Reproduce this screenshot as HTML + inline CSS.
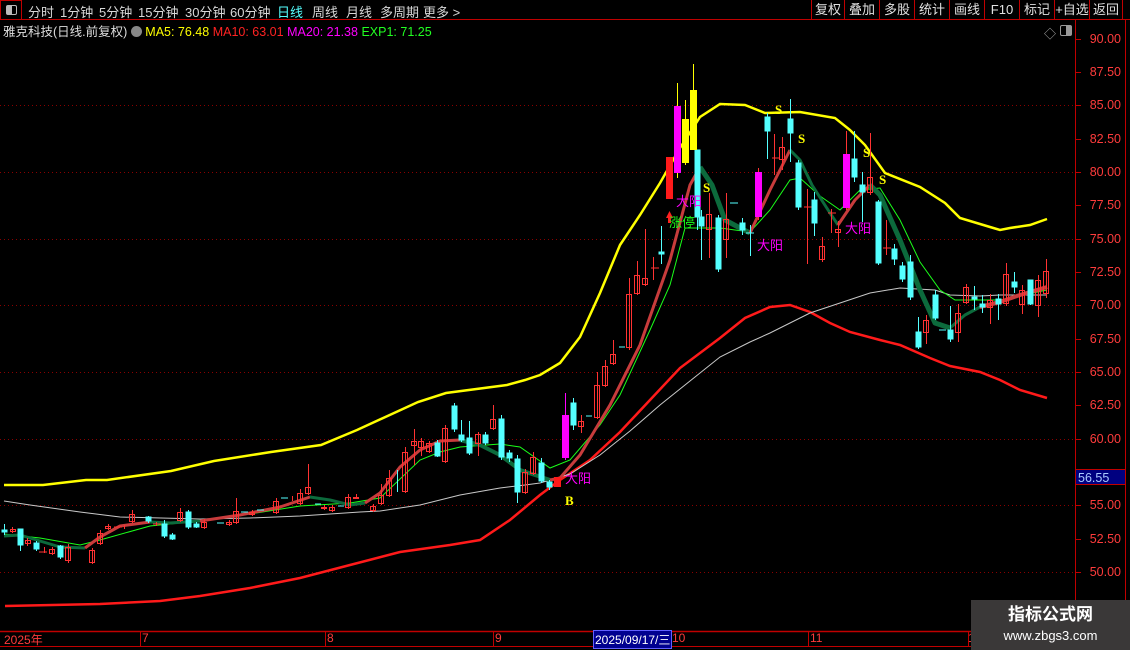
<!DOCTYPE html>
<html><head><meta charset="utf-8"><style>
*{margin:0;padding:0;box-sizing:border-box}
body{width:1130px;height:650px;background:#000;overflow:hidden;font-family:"Liberation Sans","Noto Sans CJK SC",sans-serif;position:relative}
.top{position:absolute;left:0;top:0;width:1130px;height:20px;border-bottom:1px solid #c00000}
.tab{position:absolute;top:2px;font-size:13px;color:#d8d8d8}
.btn{position:absolute;top:0;height:19px;border-left:1px solid #c00000;font-size:13px;color:#e0e0e0;text-align:center;line-height:19px}
.l2{position:absolute;top:21px;left:3px;font-size:12.5px;white-space:nowrap}
.ax{position:absolute;right:9px;font-size:12.5px;color:#ff3c3c;text-align:right}
.dl{position:absolute;top:631px;font-size:12px;color:#ff3c3c}
</style></head><body>
<div class="top">
<div style="position:absolute;left:0;top:0;width:22px;height:20px;border:1px solid #c00000"><div style="position:absolute;left:5px;top:4px;width:11px;height:10px;border:1px solid #bbb;border-radius:2px"><div style="position:absolute;left:0;top:0;width:5px;height:8px;background:#bbb"></div></div></div>
<span class="tab" style="left:28px">分时</span><span class="tab" style="left:60px">1分钟</span><span class="tab" style="left:99px">5分钟</span><span class="tab" style="left:138px">15分钟</span><span class="tab" style="left:185px">30分钟</span><span class="tab" style="left:230px">60分钟</span><span class="tab" style="left:277px;color:#5ff">日线</span><span class="tab" style="left:312px">周线</span><span class="tab" style="left:346px">月线</span><span class="tab" style="left:380px">多周期</span><span class="tab" style="left:423px">更多 &gt;</span>
<div class="btn" style="left:811px;width:33px">复权</div><div class="btn" style="left:844px;width:35px">叠加</div><div class="btn" style="left:879px;width:35px">多股</div><div class="btn" style="left:914px;width:35px">统计</div><div class="btn" style="left:949px;width:35px">画线</div><div class="btn" style="left:984px;width:35px">F10</div><div class="btn" style="left:1019px;width:35px">标记</div><div class="btn" style="left:1054px;width:35px">+自选</div><div class="btn" style="left:1089px;width:34px;border-right:1px solid #c00000">返回</div>
</div>
<div class="l2"><span style="color:#ddd">雅克科技(日线.前复权)</span> <span style="display:inline-block;width:11px;height:11px;border-radius:6px;background:#888;vertical-align:-1px"></span> <span style="color:#ff0">MA5: 76.48</span> <span style="color:#f22">MA10: 63.01</span> <span style="color:#f0f">MA20: 21.38</span> <span style="color:#2f2">EXP1: 71.25</span></div>
<div style="position:absolute;left:1044px;top:25px;color:#aaa;font-size:12px">◇</div>
<div style="position:absolute;left:1060px;top:25px;width:12px;height:11px;border:1px solid #999;border-radius:2px"><div style="position:absolute;right:0;top:0;width:5px;height:9px;background:#999"></div></div>
<svg width="1130" height="650" style="position:absolute;left:0;top:0">
<g stroke="#8a0000" stroke-dasharray="1,3" stroke-width="1">
<line x1="0" y1="105.5" x2="1075" y2="105.5"/><line x1="0" y1="172.5" x2="1075" y2="172.5"/><line x1="0" y1="239.5" x2="1075" y2="239.5"/><line x1="0" y1="305.5" x2="1075" y2="305.5"/><line x1="0" y1="372.5" x2="1075" y2="372.5"/><line x1="0" y1="439.5" x2="1075" y2="439.5"/><line x1="0" y1="505.5" x2="1075" y2="505.5"/><line x1="0" y1="572.5" x2="1075" y2="572.5"/>
</g>
<line x1="1075.5" y1="20" x2="1075.5" y2="631" stroke="#c00000"/>
<line x1="1125.5" y1="20" x2="1125.5" y2="650" stroke="#c00000"/>
<line x1="0" y1="631.5" x2="1130" y2="631.5" stroke="#c00000" stroke-width="1.5"/>
<line x1="0" y1="646.5" x2="1130" y2="646.5" stroke="#c00000"/>
<g stroke="#c00000"><line x1="1076" y1="39.5" x2="1081" y2="39.5"/><line x1="1076" y1="72.5" x2="1081" y2="72.5"/><line x1="1076" y1="105.5" x2="1081" y2="105.5"/><line x1="1076" y1="139.5" x2="1081" y2="139.5"/><line x1="1076" y1="172.5" x2="1081" y2="172.5"/><line x1="1076" y1="205.5" x2="1081" y2="205.5"/><line x1="1076" y1="239.5" x2="1081" y2="239.5"/><line x1="1076" y1="272.5" x2="1081" y2="272.5"/><line x1="1076" y1="305.5" x2="1081" y2="305.5"/><line x1="1076" y1="339.5" x2="1081" y2="339.5"/><line x1="1076" y1="372.5" x2="1081" y2="372.5"/><line x1="1076" y1="405.5" x2="1081" y2="405.5"/><line x1="1076" y1="439.5" x2="1081" y2="439.5"/><line x1="1076" y1="472.5" x2="1081" y2="472.5"/><line x1="1076" y1="505.5" x2="1081" y2="505.5"/><line x1="1076" y1="539.5" x2="1081" y2="539.5"/><line x1="1076" y1="572.5" x2="1081" y2="572.5"/>
<line x1="140.5" y1="632" x2="140.5" y2="646"/><line x1="325.5" y1="632" x2="325.5" y2="646"/><line x1="493.5" y1="632" x2="493.5" y2="646"/><line x1="808.5" y1="632" x2="808.5" y2="646"/><line x1="968.5" y1="632" x2="968.5" y2="646"/></g>
<!-- bands -->
<polyline fill="none" stroke="#ffff00" stroke-width="2.5" points="4,485 43,485 86,480 107,480 171,471 214,461 271,452 321,445 357,430 418,402 446,393 507,385 525,380 540,375 560,363 580,337 600,293 620,245 640,215 660,183 680,148 700,117 720,104 745,105 765,113 800,112 835,118 850,130 865,145 885,173 920,187 945,203 960,218 990,227 1000,230 1010,228 1030,225 1047,219"/>
<polyline fill="none" stroke="#ff1a1a" stroke-width="2.5" points="5,606 100,604 160,601 200,596 250,588 300,578 350,565 400,552 450,545 480,540 510,520 540,495 560,480 590,460 620,432 650,400 680,368 720,338 745,318 770,307 790,305 810,312 830,323 850,332 880,340 900,345 930,358 950,366 980,372 1000,380 1020,390 1047,398"/>
<polyline fill="none" stroke="#c8c8c8" stroke-width="1" points="4,501 30,505 80,512 120,517 200,519 250,518 300,516 360,512 380,511 420,505 460,495 500,488 525,485 540,483 570,474 600,455 630,431 660,405 690,381 720,357 750,342 770,333 790,323 810,313 840,303 870,293 900,288 935,290 950,295 980,296 1000,295 1047,295"/>
<polyline fill="none" stroke="#1aff1a" stroke-width="1" points="4,534 40,538 80,545 100,540 150,526 200,521 250,514 300,506 350,503 380,498 420,460 440,452 460,447 500,444 520,447 550,468 570,460 600,425 620,395 650,330 670,285 685,228 700,228 720,228 750,232 770,210 790,180 800,178 820,196 840,210 860,190 880,188 900,220 920,262 940,290 955,300 975,300 1000,300 1047,290"/>
<g fill="none" stroke-width="3" stroke-linejoin="round">
<polyline stroke="#0c6a3c" points="4,536 20,535 40,541 60,547 85,548"/>
<polyline stroke="#c83c3c" points="85,548 100,537 120,526 150,522"/>
<polyline stroke="#0c6a3c" points="150,522 170,523 200,521"/>
<polyline stroke="#c83c3c" points="200,521 240,515 280,507 310,497"/>
<polyline stroke="#0c6a3c" points="310,497 330,500 350,505 365,503"/>
<polyline stroke="#c83c3c" points="365,503 380,493 400,467 420,450 440,441 460,440"/>
<polyline stroke="#0c6a3c" stroke-width="4" points="460,440 480,445 500,455 520,470 550,480"/>
<polyline stroke="#c83c3c" points="550,480 560,478 580,455 610,405 640,345 670,260 690,185 700,167"/>
<polyline stroke="#0c6a3c" stroke-width="5" points="700,167 712,185 725,220 740,228 750,233"/>
<polyline stroke="#c83c3c" points="750,233 770,190 790,150"/>
<polyline stroke="#0c6a3c" points="790,150 800,160 812,185 830,213 838,225"/>
<polyline stroke="#c83c3c" points="838,225 855,200 870,185"/>
<polyline stroke="#0c6a3c" stroke-width="5" points="870,185 880,195 900,240 920,290 935,323 950,328"/>
<polyline stroke="#0c6a3c" points="950,328 965,315 980,307"/>
<polyline stroke="#c83c3c" stroke-width="4" points="980,307 1000,302 1020,295 1047,287"/>
</g>
<!-- candles -->
<g id="c"></g>
<g stroke="#ff3232" fill="none" stroke-width="1">
<path d="M12.5,527V533M27.5,538V546M44.5,547V553M52.5,547V555M68.5,544V563M92.5,548V564M100.5,530V545M108.5,524V530M124.5,525V529M132.5,510V523M156.5,522V526M180.5,508V522M204.5,519V529M229.5,520V526M236.5,498V524M252.5,510V516M276.5,498V514M292.5,496V501M300.5,489V505M308.5,464V495M324.5,505V510M332.5,505V512M348.5,494V509M356.5,494V499M373.5,504V512M381.5,484V505M389.5,470V497M405.5,447V493M414.5,429V465M421.5,438V456M429.5,441V453M445.5,425V463M478.5,432V456M493.5,405V430M525.5,469V494M533.5,452V475M581.5,415V433M597.5,372V419M605.5,360V387M613.5,340V365M629.5,278V350M637.5,261V295M645.5,229V286M653.5,257V280M709.5,193V258M726.5,193V258M774.5,134V175M782.5,137V170M807.5,189V264M822.5,237V262M831.5,209V233M838.5,221V247M870.5,133V195M886.5,220V255M926.5,315V344M958.5,304V342M966.5,284V304M990.5,294V324M1006.5,263V306M1022.5,285V314M1038.5,275V317M1046.5,259V298"/>
<rect x="10.5" y="529.5" width="5" height="2"/><rect x="25.5" y="540.5" width="5" height="3"/><rect x="49.5" y="549.5" width="5" height="4"/><rect x="65.5" y="547.5" width="5" height="13"/><rect x="89.5" y="550.5" width="5" height="12"/><rect x="97.5" y="533.5" width="5" height="10"/><rect x="105.5" y="526.5" width="5" height="2"/><rect x="129.5" y="514.5" width="5" height="7"/><rect x="177.5" y="512.5" width="5" height="8"/><rect x="201.5" y="522.5" width="5" height="5"/><rect x="226.5" y="522.5" width="5" height="2"/><rect x="233.5" y="511.5" width="5" height="11"/><rect x="249.5" y="512.5" width="5" height="2"/><rect x="273.5" y="501.5" width="5" height="11"/><rect x="297.5" y="493.5" width="5" height="10"/><rect x="305.5" y="487.5" width="5" height="6"/><rect x="321.5" y="507.5" width="5" height="1"/><rect x="329.5" y="507.5" width="5" height="3"/><rect x="345.5" y="497.5" width="5" height="10"/><rect x="353.5" y="497.5" width="5" height="1"/><rect x="370.5" y="506.5" width="5" height="4"/><rect x="378.5" y="495.5" width="5" height="8"/><rect x="386.5" y="478.5" width="5" height="17"/><rect x="402.5" y="452.5" width="5" height="39"/><rect x="411.5" y="441.5" width="5" height="4"/><rect x="418.5" y="441.5" width="5" height="6"/><rect x="426.5" y="443.5" width="5" height="8"/><rect x="442.5" y="428.5" width="5" height="33"/><rect x="475.5" y="434.5" width="5" height="9"/><rect x="490.5" y="419.5" width="5" height="9"/><rect x="522.5" y="472.5" width="5" height="20"/><rect x="530.5" y="457.5" width="5" height="16"/><rect x="578.5" y="421.5" width="5" height="5"/><rect x="594.5" y="385.5" width="5" height="32"/><rect x="602.5" y="366.5" width="5" height="19"/><rect x="610.5" y="354.5" width="5" height="9"/><rect x="626.5" y="294.5" width="5" height="53"/><rect x="634.5" y="275.5" width="5" height="18"/><rect x="642.5" y="278.5" width="5" height="6"/><rect x="706.5" y="214.5" width="5" height="15"/><rect x="723.5" y="219.5" width="5" height="20"/><rect x="779.5" y="147.5" width="5" height="12"/><rect x="819.5" y="246.5" width="5" height="13"/><rect x="835.5" y="229.5" width="5" height="3"/><rect x="867.5" y="177.5" width="5" height="15"/><rect x="923.5" y="320.5" width="5" height="12"/><rect x="955.5" y="313.5" width="5" height="19"/><rect x="963.5" y="287.5" width="5" height="15"/><rect x="987.5" y="300.5" width="5" height="7"/><rect x="1003.5" y="274.5" width="5" height="29"/><rect x="1019.5" y="290.5" width="5" height="14"/><rect x="1035.5" y="280.5" width="5" height="25"/><rect x="1043.5" y="271.5" width="5" height="22"/>
<path d="M39,552H47M114,527H122M153,524H161M651,268H659M772,158H780M804,207H812M828,213H836M883,248H891"/>
</g>
<g fill="#54ffff" stroke="#54ffff" stroke-width="1">
<path d="M4.5,524V535M20.5,529V551M36.5,541V551M60.5,545V559M148.5,516V523M164.5,520V538M172.5,533V540M188.5,510V529M196.5,522V528M397.5,470V492M437.5,440V457M454.5,403V432M461.5,420V442M469.5,421V455M485.5,432V445M501.5,415V460M509.5,450V462M517.5,455V503M541.5,458V483M549.5,480V490M573.5,398V430M661.5,226V264M697.5,150V230M701.5,210V260M718.5,215V272M742.5,218V235M750.5,225V256M767.5,113V159M790.5,99V162M798.5,160V210M814.5,192V236M854.5,131V182M862.5,172V222M878.5,200V265M894.5,244V265M902.5,262V282M910.5,255V300M918.5,317V349M935.5,290V320M950.5,306V342M974.5,286V310M982.5,295V313M998.5,294V320M1014.5,272V293M1030.5,280V305"/>
<rect x="2" y="530" width="5" height="2"/><rect x="18" y="529" width="5" height="16"/><rect x="34" y="543" width="5" height="6"/><rect x="58" y="546" width="5" height="11"/><rect x="146" y="517" width="5" height="4"/><rect x="162" y="524" width="5" height="12"/><rect x="170" y="535" width="5" height="4"/><rect x="186" y="512" width="5" height="15"/><rect x="194" y="524" width="5" height="3"/><rect x="435" y="443" width="5" height="13"/><rect x="452" y="406" width="5" height="23"/><rect x="459" y="435" width="5" height="5"/><rect x="467" y="438" width="5" height="15"/><rect x="483" y="435" width="5" height="8"/><rect x="499" y="419" width="5" height="38"/><rect x="507" y="453" width="5" height="5"/><rect x="515" y="459" width="5" height="33"/><rect x="539" y="463" width="5" height="18"/><rect x="547" y="482" width="5" height="5"/><rect x="571" y="403" width="5" height="22"/><rect x="659" y="252" width="5" height="2"/><rect x="695" y="150" width="5" height="67"/><rect x="699" y="217" width="5" height="9"/><rect x="716" y="218" width="5" height="51"/><rect x="740" y="223" width="5" height="7"/><rect x="765" y="117" width="5" height="14"/><rect x="788" y="119" width="5" height="14"/><rect x="796" y="163" width="5" height="44"/><rect x="812" y="200" width="5" height="23"/><rect x="852" y="159" width="5" height="18"/><rect x="860" y="185" width="5" height="7"/><rect x="876" y="202" width="5" height="61"/><rect x="892" y="249" width="5" height="10"/><rect x="900" y="266" width="5" height="13"/><rect x="908" y="262" width="5" height="35"/><rect x="916" y="332" width="5" height="15"/><rect x="933" y="295" width="5" height="23"/><rect x="948" y="330" width="5" height="9"/><rect x="972" y="297" width="5" height="2"/><rect x="980" y="304" width="5" height="3"/><rect x="996" y="299" width="5" height="5"/><rect x="1012" y="282" width="5" height="5"/><rect x="1028" y="280" width="5" height="24"/>
<path d="M217,523H224M241,512H248M257,510H264M281,498H288M315,504H321M338,506H344M586,416H592M619,347H625M730,203H738M746,233H754M939,330H946"/>
</g>
<!-- filled special candles -->
<rect x="554" y="477" width="7" height="10" fill="#ff1a1a"/><rect x="666" y="157" width="7" height="42" fill="#ff1a1a"/>
<line x1="565.5" y1="393" x2="565.5" y2="460" stroke="#f0f"/><rect x="562" y="415" width="7" height="43" fill="#f0f"/>
<line x1="677.5" y1="83" x2="677.5" y2="178" stroke="#ff0"/><rect x="674" y="106" width="7" height="67" fill="#f0f"/>
<line x1="685.5" y1="100" x2="685.5" y2="165" stroke="#ff0"/><rect x="682" y="119" width="7" height="44" fill="#ff0"/>
<line x1="693.5" y1="64" x2="693.5" y2="150" stroke="#ff0"/><rect x="690" y="90" width="7" height="60" fill="#ff0"/>
<line x1="758.5" y1="168" x2="758.5" y2="220" stroke="#f33"/><rect x="755" y="172" width="7" height="45" fill="#f0f"/>
<line x1="846.5" y1="131" x2="846.5" y2="210" stroke="#f33"/><rect x="843" y="154" width="7" height="54" fill="#f0f"/>
<path d="M666,218L669.5,211L673,218Z M668,218h3v5h-3z" fill="#ff2020"/>
<g font-family="Liberation Sans,Noto Sans CJK SC,sans-serif" font-size="13">
<text x="676" y="206" fill="#f0f">大阳</text><text x="669" y="227" fill="#1aff1a">涨停</text>
<text x="757" y="250" fill="#f0f">大阳</text><text x="845" y="233" fill="#f0f">大阳</text><text x="565" y="483" fill="#f0f">大阳</text>
</g>
<g font-family="Liberation Serif,serif" font-size="13" font-weight="bold" fill="#ff0">
<text x="775" y="114">S</text><text x="798" y="143">S</text><text x="703" y="192">S</text><text x="863" y="157">S</text><text x="879" y="184">S</text><text x="565" y="505">B</text>
</g>
</svg>
<div class="ax" style="top:32px">90.00</div><div class="ax" style="top:65px">87.50</div><div class="ax" style="top:98px">85.00</div><div class="ax" style="top:132px">82.50</div><div class="ax" style="top:165px">80.00</div><div class="ax" style="top:198px">77.50</div><div class="ax" style="top:232px">75.00</div><div class="ax" style="top:265px">72.50</div><div class="ax" style="top:298px">70.00</div><div class="ax" style="top:332px">67.50</div><div class="ax" style="top:365px">65.00</div><div class="ax" style="top:398px">62.50</div><div class="ax" style="top:432px">60.00</div><div class="ax" style="top:498px">55.00</div><div class="ax" style="top:532px">52.50</div><div class="ax" style="top:565px">50.00</div>
<div style="position:absolute;left:1076px;top:469px;width:49px;height:16px;background:#000080;color:#aac8ff;font-size:12.5px;line-height:16px;padding-left:2px;border-top:1px solid #c00000;border-bottom:1px solid #c00000">56.55</div>
<div class="dl" style="left:4px">2025年</div><div class="dl" style="left:142px">7</div><div class="dl" style="left:327px">8</div><div class="dl" style="left:495px">9</div>
<div class="dl" style="left:593px;top:630px;background:#000090;color:#fff;padding:0 1px;border:1px solid #6060ff">2025/09/17/三</div>
<div class="dl" style="left:672px">10</div><div class="dl" style="left:810px">11</div><div class="dl" style="left:968px">1</div>
<div style="position:absolute;left:971px;top:600px;width:159px;height:50px;background:#3a3838;text-align:center;color:#fff">
<div style="font-size:17px;font-weight:bold;margin-top:5px;line-height:20px">指标公式网</div>
<div style="font-size:13px;line-height:18px;margin-top:2px">www.zbgs3.com</div></div>
</body></html>
